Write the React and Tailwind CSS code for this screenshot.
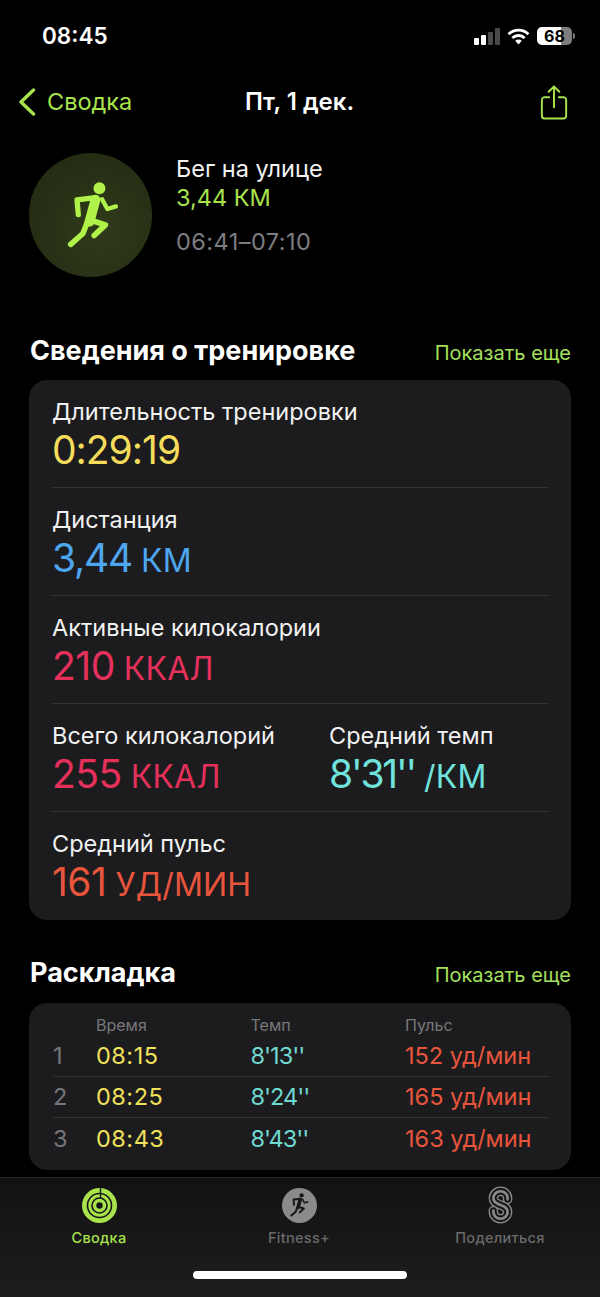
const font = { fontFamily: "Inter, 'Noto Sans', sans-serif" }

function Runner({ className, color = "#b0f24a" }) {
  return (
    <svg viewBox="140 106 160 200" className={className} fill="none" stroke={color} strokeLinecap="round" strokeLinejoin="round">
      <circle cx="238" cy="125" r="18" fill={color} stroke="none" />
      <path d="M174 205 L170 160 L226 153" strokeWidth="16" />
      <path d="M226 160 L208 226" strokeWidth="30" />
      <path d="M246 158 L262 188 L288 180" strokeWidth="13" />
      <path d="M202 226 L188 262 L151 295" strokeWidth="17" />
      <path d="M212 222 L256 236 L222 268" strokeWidth="17" />
    </svg>
  )
}

function ShowMore() {
  return <span className="mt-[4px] text-[20px] text-[#a5e05c]">Показать еще</span>
}

function Metric({ label, value, unit, color, tracking = "tracking-[-0.5px]", className }) {
  return (
    <div className={className}>
      <div className="text-[23.5px] leading-[30px] text-[#f2f2f2]">{label}</div>
      <div className={`mt-[1px] flex items-baseline gap-[9px] leading-[44px] ${color}`}>
        <span className={`text-[39px] ${tracking}`}>{value}</span>
        {unit && <span className="text-[32px] tracking-[0.2px]">{unit}</span>}
      </div>
    </div>
  )
}

function SplitRow({ n, time, pace, bpm, last }) {
  return (
    <div className={`flex h-[41.5px] items-center text-[23.5px] ${last ? "" : "border-b border-[#333335]"}`}>
      <span className="w-[43px] text-[#77777b]">{n}</span>
      <span className="w-[154.5px] tracking-[0.5px] text-[#f1e05a]">{time}</span>
      <span className="w-[154.5px] tracking-[-1px] text-[#6fd8d0]">{pace}</span>
      <span className="text-[#e8553d]">{bpm}</span>
    </div>
  )
}

function Rings() {
  return (
    <svg viewBox="0 0 35 35" className="h-[35px] w-[35px]">
      <circle cx="17.5" cy="17.5" r="17.5" fill="#a9e34b" />
      <circle cx="17.5" cy="17.5" r="12" fill="none" stroke="#161616" strokeWidth="1.6" />
      <circle cx="17.5" cy="17.5" r="7.5" fill="none" stroke="#161616" strokeWidth="1.6" />
      <circle cx="17.5" cy="17.5" r="3.2" fill="#161616" />
      <path d="M18.5 0 V10" stroke="#161616" strokeWidth="1.4" />
    </svg>
  )
}

function ShareRings() {
  const d = "M20 13 V12 A7.5 7.5 0 0 0 5 12 C5 16 8 17.5 12.5 19 C17 20.5 20 22 20 26 A7.5 7.5 0 0 1 5 26 V25"
  return (
    <svg viewBox="0 -1 25 40" className="h-[38px] w-[25px]" fill="none" strokeLinecap="round">
      <path d={d} stroke="#8a8a8a" strokeWidth="10" />
      <path d={d} stroke="#161616" strokeWidth="7.2" />
      <path d={d} stroke="#8a8a8a" strokeWidth="2.8" />
    </svg>
  )
}

export default function App() {
  return (
    <div className="flex h-[1297px] w-[600px] flex-col overflow-hidden bg-black text-white" style={font}>
      {/* status bar */}
      <div className="flex h-[72px] items-center justify-between pl-[42px] pr-[25px]">
        <span className="text-[22.5px] font-semibold">08:45</span>
        <div className="flex items-center gap-[7px]">
          <div className="flex items-end gap-[2px]">
            <div className="h-[7px] w-[5px] rounded-[1px] bg-white" />
            <div className="h-[10px] w-[5px] rounded-[1px] bg-white" />
            <div className="h-[13px] w-[5px] rounded-[1px] bg-[#4a4a4a]" />
            <div className="h-[17px] w-[5px] rounded-[1px] bg-[#4a4a4a]" />
          </div>
          <svg viewBox="0 0 24 18" className="h-[17px] w-[23px]" fill="none" stroke="#fff" strokeWidth="3">
            <path d="M1.5 6.5 A15 15 0 0 1 22.5 6.5" />
            <path d="M5.5 10.5 A9.5 9.5 0 0 1 18.5 10.5" />
            <path d="M12 17.5 L8.5 13.5 A5 5 0 0 1 15.5 13.5 Z" fill="#fff" stroke="none" />
          </svg>
          <div className="flex items-center gap-[1px]">
            <div className="flex h-[18px] w-[35px] items-center justify-center rounded-[5px] bg-[linear-gradient(90deg,#fff_0,#fff_69%,#7d7d7d_69%)] text-[16px] font-bold text-black">68</div>
            <div className="h-[6px] w-[2px] rounded-r-full bg-[#7d7d7d]" />
          </div>
        </div>
      </div>

      {/* nav */}
      <div className="flex h-[60px] items-center justify-between pl-[18px] pr-[32px]">
        <div className="flex w-[213px] items-center gap-[11px] text-[#a9e34b]">
          <svg viewBox="0 0 18 28" className="h-[28px] w-[18px]" fill="none" stroke="#a9e34b" strokeWidth="3.4" strokeLinecap="round" strokeLinejoin="round">
            <path d="M15.5 2 L3 14 L15.5 26" />
          </svg>
          <span className="text-[23.5px]">Сводка</span>
        </div>
        <span className="text-[24px] font-semibold">Пт, 1 дек.</span>
        <div className="flex w-[200px] justify-end">
          <svg viewBox="0 0 28 36" className="h-[35px] w-[28px]" fill="none" stroke="#a9e34b" strokeWidth="2" strokeLinecap="round" strokeLinejoin="round">
            <path d="M14 23 V2 M8.5 7 L14 1.5 L19.5 7" />
            <path d="M9 12.5 H4 A3 3 0 0 0 1.5 15 V31.5 A3 3 0 0 0 4 34.5 H24 A3 3 0 0 0 26.5 31.5 V15 A3 3 0 0 0 24 12.5 H19" />
          </svg>
        </div>
      </div>

      {/* workout header */}
      <div className="mt-[21px] flex pl-[29px]">
        <div className="flex h-[124px] w-[123px] items-center justify-center rounded-full bg-[radial-gradient(circle_at_58%_62%,#303b1b,#20270f)]">
          <Runner className="ml-[5px] h-[66px] w-[53px]" />
        </div>
        <div className="ml-[24px]">
          <div className="mt-[1px] text-[23.5px] leading-[30px] text-[#f2f2f2]">Бег на улице</div>
          <div className="text-[23.5px] leading-[28px] text-[#a9e34b]">3,44 КМ</div>
          <div className="mt-[15px] text-[23.5px] leading-[30px] tracking-[0.45px] text-[#7c7c80]">06:41–07:10</div>
        </div>
      </div>

      {/* details */}
      <div className="mt-[55px] flex items-center justify-between pl-[30px] pr-[29px]">
        <h2 className="text-[27px] font-bold leading-[38px]">Сведения о тренировке</h2>
        <ShowMore />
      </div>
      <div className="mx-[29px] mt-[10px] h-[540px] rounded-[18px] bg-[#1c1c1e] pl-[23px] pr-[23px] pt-[17px]">
        <Metric label="Длительность тренировки" value="0:29:19" color="text-[#f5dc5a]" tracking="tracking-[-1px]" className="h-[90px]" />
        <div className="mb-[17px] border-b border-[#343436]" />
        <Metric label="Дистанция" value="3,44" unit="КМ" color="text-[#4da6ee]" tracking="tracking-[-1.2px]" className="h-[90px]" />
        <div className="mb-[17px] border-b border-[#343436]" />
        <Metric label="Активные килокалории" value="210" unit="ККАЛ" color="text-[#e5305b]" className="h-[90px]" />
        <div className="mb-[17px] border-b border-[#343436]" />
        <div className="flex h-[90px]">
          <Metric label="Всего килокалорий" value="255" unit="ККАЛ" color="text-[#e5305b]" className="w-[277px]" />
          <Metric label="Средний темп" value="8'31''" unit="/КМ" color="text-[#6fe3dc]" tracking="tracking-[-2.2px]" />
        </div>
        <div className="mb-[17px] border-b border-[#343436]" />
        <Metric label="Средний пульс" value="161" unit="УД/МИН" color="text-[#e8553d]" />
      </div>

      {/* splits */}
      <div className="mt-[34px] flex items-center justify-between pl-[30px] pr-[29px]">
        <h2 className="text-[27px] font-bold leading-[38px]">Раскладка</h2>
        <ShowMore />
      </div>
      <div className="mx-[29px] mt-[11px] h-[167px] rounded-[18px] bg-[#1c1c1e] pl-[24px] pr-[23px] pt-[11px]">
        <div className="flex h-[21px] items-center text-[16px] text-[#77777b]">
          <span className="w-[43px]" />
          <span className="w-[154.5px]">Время</span>
          <span className="w-[154.5px]">Темп</span>
          <span>Пульс</span>
        </div>
        <SplitRow n="1" time="08:15" pace="8'13''" bpm="152 уд/мин" />
        <SplitRow n="2" time="08:25" pace="8'24''" bpm="165 уд/мин" />
        <SplitRow n="3" time="08:43" pace="8'43''" bpm="163 уд/мин" last />
      </div>

      {/* tab bar */}
      <div className="mt-[7px] flex flex-1 flex-col border-t border-[#262626] bg-[linear-gradient(180deg,#121212,#1d1d1d)]">
        <div className="flex pt-[8px]">
          <div className="flex w-[198px] flex-col items-center">
            <div className="flex h-[38px] items-center"><Rings /></div>
            <span className="mt-[4px] text-[14.5px] font-medium leading-[20px] tracking-[0.3px] text-[#a9e34b]">Сводка</span>
          </div>
          <div className="flex flex-1 flex-col items-center">
            <div className="flex h-[38px] items-center">
              <div className="flex h-[35px] w-[35px] items-center justify-center rounded-full bg-[#8a8a8a]">
                <Runner className="h-[24px] w-[19px]" color="#161616" />
              </div>
            </div>
            <span className="mt-[4px] text-[14.5px] font-medium leading-[20px] tracking-[0.3px] text-[#6a6a6a]">Fitness+</span>
          </div>
          <div className="flex w-[200px] flex-col items-center">
            <div className="flex h-[38px] items-center"><ShareRings /></div>
            <span className="mt-[4px] text-[14.5px] font-medium leading-[20px] tracking-[0.3px] text-[#6a6a6a]">Поделиться</span>
          </div>
        </div>
        <div className="mx-auto mt-[23px] h-[8px] w-[214px] rounded-full bg-white" />
      </div>
    </div>
  )
}
